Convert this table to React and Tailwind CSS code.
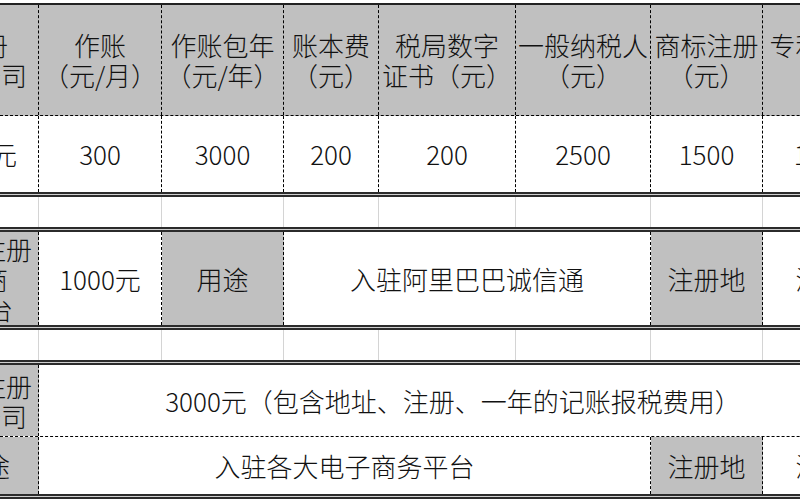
import React from "react";

function DoubleLine() {
  return (
    <div className="flex flex-col shrink-0">
      <div className="h-[2px] bg-[#2b2b2b]" />
      <div className="h-px bg-[#cfcfcf]" />
      <div className="h-[2px] bg-[#2b2b2b]" />
    </div>
  );
}

function FirstCol({ gray, lines }) {
  return (
    <div
      className={`w-[39px] shrink-0 border-r border-dashed border-black overflow-hidden flex flex-col items-end justify-center ${
        gray ? "bg-[#c0c0c0]" : "bg-white"
      }`}
    >
      {lines.map((l, i) => (
        <div key={i} className="whitespace-nowrap" style={{ marginRight: l.mr }}>
          {l.t}
        </div>
      ))}
    </div>
  );
}

function GapRow() {
  return (
    <div className="flex h-[30px] shrink-0 bg-white">
      <div className="w-[39px] shrink-0 border-r border-[#d4d4d4]" />
      <div className="w-[123px] shrink-0 border-r border-[#d4d4d4]" />
      <div className="w-[122px] shrink-0 border-r border-[#d4d4d4]" />
      <div className="w-[95px] shrink-0 border-r border-[#d4d4d4]" />
      <div className="w-[137px] shrink-0 border-r border-[#d4d4d4]" />
      <div className="w-[135px] shrink-0 border-r border-[#d4d4d4]" />
      <div className="w-[112px] shrink-0 border-r border-[#d4d4d4]" />
      <div className="w-[118px] shrink-0 border-r border-[#d4d4d4]" />
    </div>
  );
}

const cellBase =
  "shrink-0 border-r border-dashed border-black flex flex-col items-center justify-center text-center whitespace-nowrap";

export default function App() {
  return (
    <div className="w-[800px] h-[500px] overflow-hidden bg-white text-[#111] text-[26px] leading-[30px] font-light font-['Noto_Sans_CJK_SC',sans-serif]">
      <div className="w-[1000px] flex flex-col">
        <div className="h-[3px] bg-white" />
        <div className="h-[2px] bg-[#222]" />

        {/* Header */}
        <div className="flex h-[111px] border-b border-dashed border-black bg-[#c0c0c0]">
          <FirstCol gray lines={[{ t: "注册", mr: 30 }, { t: "公司", mr: 11 }]} />
          <div className={`w-[123px] ${cellBase}`}>
            <div>作账</div>
            <div>（元/月）</div>
          </div>
          <div className={`w-[122px] ${cellBase}`}>
            <div>作账包年</div>
            <div>（元/年）</div>
          </div>
          <div className={`w-[95px] ${cellBase}`}>
            <div>账本费</div>
            <div>（元）</div>
          </div>
          <div className={`w-[137px] ${cellBase}`}>
            <div>税局数字</div>
            <div>证书（元）</div>
          </div>
          <div className={`w-[135px] ${cellBase}`}>
            <div>一般纳税人</div>
            <div>（元）</div>
          </div>
          <div className={`w-[112px] ${cellBase}`}>
            <div>商标注册</div>
            <div>（元）</div>
          </div>
          <div className={`w-[118px] ${cellBase}`}>
            <div>专利申请</div>
            <div>（元）</div>
          </div>
        </div>

        {/* Row 2 */}
        <div className="flex h-[76px] bg-white">
          <FirstCol lines={[{ t: "1000元", mr: 21 }]} />
          <div className={`w-[123px] ${cellBase}`}>300</div>
          <div className={`w-[122px] ${cellBase}`}>3000</div>
          <div className={`w-[95px] ${cellBase}`}>200</div>
          <div className={`w-[137px] ${cellBase}`}>200</div>
          <div className={`w-[135px] ${cellBase}`}>2500</div>
          <div className={`w-[112px] ${cellBase}`}>1500</div>
          <div className={`w-[118px] ${cellBase}`}>1000</div>
        </div>

        <DoubleLine />
        <GapRow />
        <DoubleLine />

        {/* Row 3 */}
        <div className="flex h-[93px] bg-white">
          <FirstCol
            gray
            lines={[
              { t: "注册", mr: 6 },
              { t: "电商", mr: 30 },
              { t: "平台", mr: 25 },
            ]}
          />
          <div className={`w-[123px] ${cellBase}`}>1000元</div>
          <div className={`w-[122px] ${cellBase} bg-[#c0c0c0]`}>用途</div>
          <div className={`w-[367px] ${cellBase}`}>入驻阿里巴巴诚信通</div>
          <div className={`w-[112px] ${cellBase} bg-[#c0c0c0]`}>注册地</div>
          <div className={`w-[118px] ${cellBase}`}>深圳</div>
        </div>

        <DoubleLine />
        <GapRow />
        <DoubleLine />

        {/* Row 4 */}
        <div className="flex h-[72px] bg-white border-b border-dashed border-black">
          <FirstCol gray lines={[{ t: "注册", mr: 6 }, { t: "公司", mr: 11 }]} />
          <div className={`w-[828px] ${cellBase} border-r-0`}>
            3000元（包含地址、注册、一年的记账报税费用）
          </div>
        </div>

        {/* Row 5 */}
        <div className="flex h-[57px] bg-white">
          <FirstCol gray lines={[{ t: "用途", mr: 28 }]} />
          <div className={`w-[612px] ${cellBase}`}>入驻各大电子商务平台</div>
          <div className={`w-[112px] ${cellBase} bg-[#c0c0c0]`}>注册地</div>
          <div className={`w-[118px] ${cellBase}`}>深圳</div>
        </div>

        <DoubleLine />
      </div>
    </div>
  );
}
